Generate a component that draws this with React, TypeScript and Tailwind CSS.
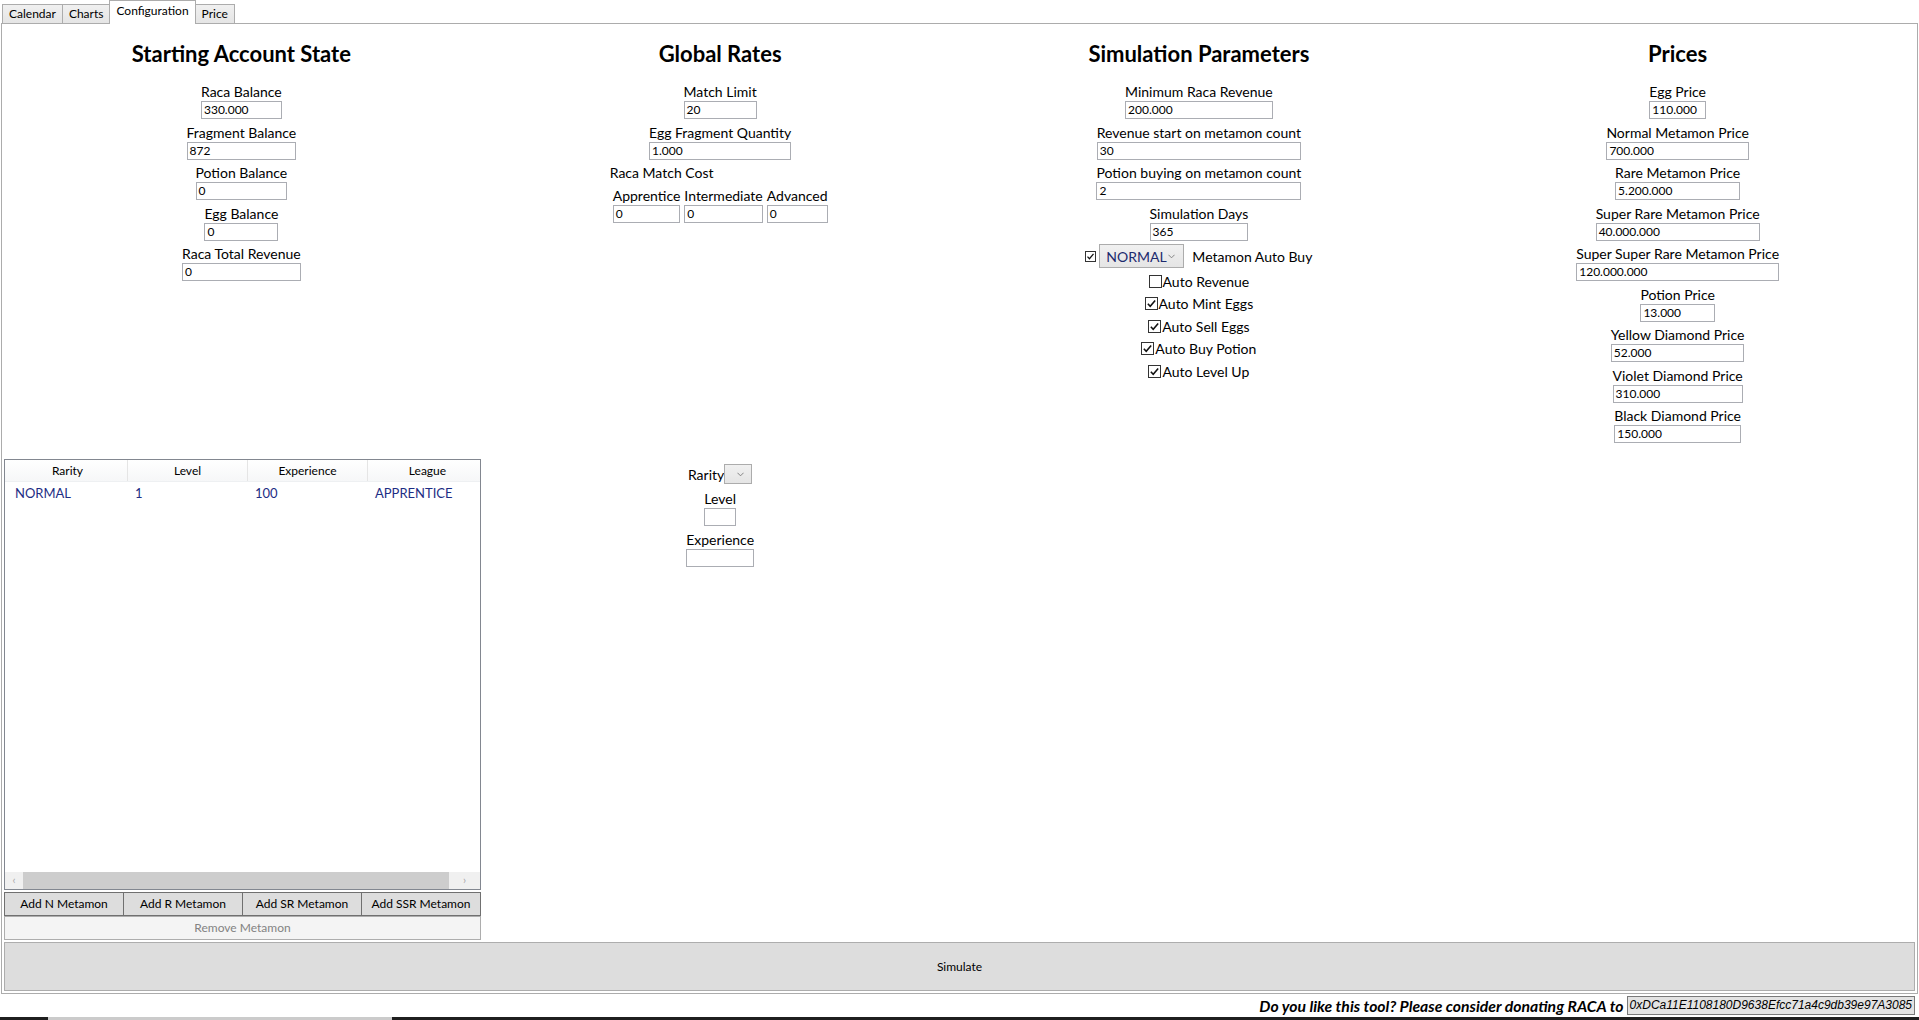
import React from "react";

const Check = () => (
  <svg viewBox="0 0 12 12" className="w-[11px] h-[11px]">
    <path d="M2 6.2 L4.6 9 L10 2.6" fill="none" stroke="#111" strokeWidth="1.7" />
  </svg>
);

function CheckBox({ checked, size = 13 }: { checked: boolean; size?: number }) {
  return (
    <span
      className="inline-flex items-center justify-center border border-[#333] bg-white shrink-0"
      style={{ width: size, height: size }}
    >
      {checked && <Check />}
    </span>
  );
}

const Chevron = () => (
  <svg viewBox="0 0 8 5" className="w-[7px] h-[5px]">
    <path d="M0.5 0.5 L4 4 L7.5 0.5" fill="none" stroke="#777" strokeWidth="1" />
  </svg>
);

function Field({ label, value = "" }: { label: string; value?: string }) {
  return (
    <div className="inline-flex flex-col mb-[3.5px]">
      <div className="text-[14px] leading-[19px] text-center whitespace-nowrap">{label}</div>
      <div className="h-[18px] border border-[#abadb3] bg-white text-[12px] leading-[16px] pl-[2px] whitespace-nowrap overflow-hidden">
        {value}
      </div>
    </div>
  );
}

function Heading({ children }: { children: React.ReactNode }) {
  return <h2 className="pt-[15px] text-[22px] leading-[30px] font-bold mb-[13px]">{children}</h2>;
}

function Tab({ label, active }: { label: string; active?: boolean }) {
  if (active)
    return (
      <div className="h-[24px] -mb-px -ml-px px-[6px] border border-b-0 border-[#acacac] bg-white text-[12px] leading-[20px]">
        {label}
      </div>
    );
  return (
    <div className="h-[19px] -ml-px first:ml-0 px-[6px] border border-b-0 border-[#acacac] bg-gradient-to-b from-[#f0f0f0] to-[#e5e5e5] text-[12px] leading-[18px]">
      {label}
    </div>
  );
}

function AutoRow({ label, checked }: { label: string; checked: boolean }) {
  return (
    <div className="h-[22.5px] flex items-center justify-center">
      <CheckBox checked={checked} />
      <span className="text-[14px] leading-[19px] ml-px">{label}</span>
    </div>
  );
}

const rows = [["NORMAL", "1", "100", "APPRENTICE"]];

export default function App() {
  return (
    <div className="w-[1919px] h-[1020px] bg-white text-black overflow-hidden font-['Lato',sans-serif]">
      {/* tabs */}
      <div className="relative z-10 h-[23px] flex items-end pl-[2px]">
        <Tab label="Calendar" />
        <Tab label="Charts" />
        <Tab label="Configuration" active />
        <Tab label="Price" />
      </div>

      <div className="mx-[1px] h-[971px] border border-[#acacac] flex flex-col">
        {/* top section */}
        <div className="h-[435px] grid grid-cols-4">
          <div className="flex flex-col items-center">
            <Heading>Starting Account State</Heading>
            <Field label="Raca Balance" value="330.000" />
            <Field label="Fragment Balance" value="872" />
            <Field label="Potion Balance" value="0" />
            <Field label="Egg Balance" value="0" />
            <Field label="Raca Total Revenue" value="0" />
          </div>

          <div className="flex flex-col items-center">
            <Heading>Global Rates</Heading>
            <Field label="Match Limit" value="20" />
            <Field label="Egg Fragment Quantity" value="1.000" />
            <div className="flex flex-col items-start">
              <div className="text-[14px] leading-[19px] -ml-[3px]">Raca Match Cost</div>
              <div className="flex gap-[4px] mt-[4px]">
                <Field label="Apprentice" value="0" />
                <Field label="Intermediate" value="0" />
                <Field label="Advanced" value="0" />
              </div>
            </div>
          </div>

          <div className="flex flex-col items-center">
            <Heading>Simulation Parameters</Heading>
            <Field label="Minimum Raca Revenue" value="200.000" />
            <Field label="Revenue start on metamon count" value="30" />
            <Field label="Potion buying on metamon count" value="2" />
            <Field label="Simulation Days" value="365" />
            <div className="flex items-center h-[24px]">
              <CheckBox checked size={11} />
              <div className="ml-[3px] w-[85px] h-[24px] border border-[#acacac] bg-gradient-to-b from-[#f0f0f0] to-[#e5e5e5] flex items-center justify-between pl-[6px] pr-[8px]">
                <span className="text-[14px] text-[#1c2a6e]">NORMAL</span>
                <Chevron />
              </div>
              <span className="ml-[8px] text-[14px] leading-[19px]">Metamon Auto Buy</span>
            </div>
            <div className="mt-[2px] flex flex-col">
              <AutoRow label="Auto Revenue" checked={false} />
              <AutoRow label="Auto Mint Eggs" checked />
              <AutoRow label="Auto Sell Eggs" checked />
              <AutoRow label="Auto Buy Potion" checked />
              <AutoRow label="Auto Level Up" checked />
            </div>
          </div>

          <div className="flex flex-col items-center">
            <Heading>Prices</Heading>
            <Field label="Egg Price" value="110.000" />
            <Field label="Normal Metamon Price" value="700.000" />
            <Field label="Rare Metamon Price" value="5.200.000" />
            <Field label="Super Rare Metamon Price" value="40.000.000" />
            <Field label="Super Super Rare Metamon Price" value="120.000.000" />
            <Field label="Potion Price" value="13.000" />
            <Field label="Yellow Diamond Price" value="52.000" />
            <Field label="Violet Diamond Price" value="310.000" />
            <Field label="Black Diamond Price" value="150.000" />
          </div>
        </div>

        {/* bottom section */}
        <div className="grid grid-cols-4">
          <div className="ml-[2px] w-[477px]">
            <div className="h-[431px] border border-[#828790] bg-white flex flex-col">
              <div className="flex-1 overflow-hidden">
                <div className="flex pl-[3px] h-[22px] bg-gradient-to-b from-white to-[#f6f7f8] border-b border-[#eef0f2]">
                  {["Rarity", "Level", "Experience", "League"].map((h) => (
                    <div
                      key={h}
                      className="w-[120px] shrink-0 border-r border-[#e5e5e5] text-[12px] leading-[22px] text-center"
                    >
                      {h}
                    </div>
                  ))}
                </div>
                {rows.map((r, i) => (
                  <div key={i} className="flex pl-[3px] h-[24px] items-center">
                    {r.map((c, j) => (
                      <div key={j} className="w-[120px] shrink-0 pl-[7px] text-[13px] text-[#1d2d84]">
                        {c}
                      </div>
                    ))}
                  </div>
                ))}
              </div>
              <div className="h-[17px] bg-[#f0f0f0] flex items-center">
                <div className="w-[18px] flex justify-center text-[#a8a8a8] text-[11px]">‹</div>
                <div className="w-[426px] h-[17px] bg-[#cdcdcd]" />
                <div className="flex-1 flex justify-center text-[#a8a8a8] text-[11px]">›</div>
              </div>
            </div>
            <div className="mt-[2px] flex h-[24px]">
              {["Add N Metamon", "Add R Metamon", "Add SR Metamon", "Add SSR Metamon"].map((b) => (
                <div
                  key={b}
                  className="flex-1 -ml-px first:ml-0 border border-[#707070] bg-[#dddddd] text-[12px] flex items-center justify-center"
                >
                  {b}
                </div>
              ))}
            </div>
            <div className="h-[24px] border border-[#adadad] bg-[#f4f4f4] text-[12px] text-[#838383] flex items-center justify-center">
              Remove Metamon
            </div>
          </div>

          <div className="flex flex-col items-center pt-[5px]">
            <div className="flex items-center h-[20px]">
              <span className="text-[14px]">Rarity</span>
              <div className="w-[28px] h-[20px] border border-[#acacac] bg-gradient-to-b from-[#f0f0f0] to-[#e5e5e5] flex items-center justify-end pr-[7px]">
                <Chevron />
              </div>
            </div>
            <div className="mt-[5px] flex flex-col items-center">
              <Field label="Level" />
              <Field label="Experience" />
            </div>
          </div>
        </div>

        <div className="mx-[2px] mt-[2px] h-[49px] border border-[#adadad] bg-[#dddddd] text-[12px] flex items-center justify-center">
          Simulate
        </div>
      </div>

      {/* footer */}
      <div className="h-[23px] flex items-center justify-end pr-[4px]">
        <span className="text-[15.75px] font-bold italic mr-[3px]">
          Do you like this tool? Please consider donating RACA to
        </span>
        <div className="h-[19px] border border-[#7a7a7a] bg-[#e3e3e3] px-[2px] text-[12px] leading-[17px] italic font-['Liberation_Sans',sans-serif]">
          0xDCa11E1108180D9638Efcc71a4c9db39e97A3085
        </div>
      </div>
      <div className="h-[3px] bg-[#1f1f1f] flex">
        <div className="ml-[48px] w-[344px] bg-[#cbcbcb]" />
      </div>
    </div>
  );
}
